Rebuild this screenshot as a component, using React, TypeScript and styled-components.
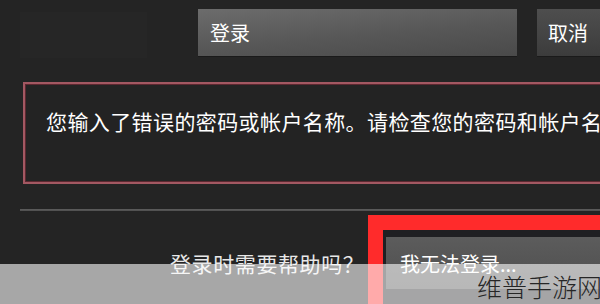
import React from "react";
import styled, { createGlobalStyle } from "styled-components";

const Global = createGlobalStyle`
    html, body {
        margin: 0;
        padding: 0;
        background: #242424;
    }
    body {
        font-family: "Noto Sans CJK SC", "Noto Sans", sans-serif;
    }
`;

const Page = styled.div`
    position: relative;
    width: 600px;
    height: 304px;
    overflow: hidden;
    background: #242424;
    color: #f2f2f2;
`;

const TopBar = styled.div`
    display: flex;
    align-items: flex-start;
    padding: 9px 0 0 20px;
`;

const GhostPanel = styled.div`
    flex-shrink: 0;
    width: 127px;
    height: 46px;
    margin-top: 3px;
    background: #262626;
`;

const ActionButton = styled.div<{ $width: number; $gap: number; $dim?: boolean }>`
    flex-shrink: 0;
    display: flex;
    align-items: center;
    box-sizing: border-box;
    width: ${({ $width }) => $width}px;
    height: 47px;
    margin-left: ${({ $gap }) => $gap}px;
    padding-left: ${({ $dim }) => ($dim ? 11 : 12)}px;
    background: ${({ $dim }) =>
        $dim
            ? "linear-gradient(180deg, #4e4e4e 0%, #3c3c3c 100%)"
            : "linear-gradient(175deg, #6c6c6c 0%, #575757 55%, #4a4a4a 100%)"};
    box-shadow: 0 1px 0 #1a1a1a;
    font-size: 20px;
    line-height: 22px;
    color: #ffffff;
`;

const ErrorBox = styled.div`
    flex-shrink: 0;
    box-sizing: border-box;
    width: 620px;
    height: 102px;
    margin: 24px 0 0 23px;
    padding: 25px 0 0 21px;
    border: 2px solid #a35862;
    box-shadow: inset 0 0 0 1px #5c2830;
    background: #232323;
`;

const ErrorText = styled.div`
    white-space: nowrap;
    font-size: 21px;
    line-height: 24px;
    letter-spacing: 0.4px;
    color: #ffffff;
`;

const Separator = styled.div`
    height: 2px;
    margin: 25px 0 0 20px;
    background: linear-gradient(180deg, #4a4a4a 0%, #6a6a6a 50%, #3a3a3a 100%);
`;

const HelpRow = styled.div`
    display: flex;
    align-items: flex-start;
    margin-top: 4px;
`;

const HelpText = styled.div`
    flex-shrink: 0;
    width: 198px;
    margin: 36px 0 0 170px;
    white-space: nowrap;
    font-size: 21px;
    line-height: 24px;
    letter-spacing: 0.6px;
    color: #e8e8e8;
`;

const Highlight = styled.div`
    flex-shrink: 0;
    box-sizing: border-box;
    width: 260px;
    height: 110px;
    padding: 7px 0 0 3px;
    border: 15px solid #ff2b2b;
    background: #1f1f22;
`;

const TroubleButton = styled.div`
    display: flex;
    align-items: center;
    height: 52px;
    padding-left: 14px;
    background: linear-gradient(180deg, #5c5c5c 0%, #4e4e4e 100%);
    font-size: 20px;
    color: #ffffff;
    white-space: nowrap;
`;

const Band = styled.div`
    position: absolute;
    left: 0;
    right: 0;
    bottom: 0;
    height: 40px;
    background: rgba(255, 255, 255, 0.6);
`;

const Watermark = styled.div`
    position: absolute;
    right: -2px;
    bottom: 3px;
    font-size: 25px;
    font-weight: 300;
    line-height: 30px;
    color: #262626;
`;

export default function App() {
    return (
        <Page>
            <Global />
            <TopBar>
                <GhostPanel />
                <ActionButton $width={319} $gap={51}>登录</ActionButton>
                <ActionButton $width={90} $gap={20} $dim>取消</ActionButton>
            </TopBar>
            <ErrorBox>
                <ErrorText>您输入了错误的密码或帐户名称。请检查您的密码和帐户名称。</ErrorText>
            </ErrorBox>
            <Separator />
            <HelpRow>
                <HelpText>登录时需要帮助吗？</HelpText>
                <Highlight>
                    <TroubleButton>我无法登录...</TroubleButton>
                </Highlight>
            </HelpRow>
            <Band />
            <Watermark>维普手游网</Watermark>
        </Page>
    );
}
